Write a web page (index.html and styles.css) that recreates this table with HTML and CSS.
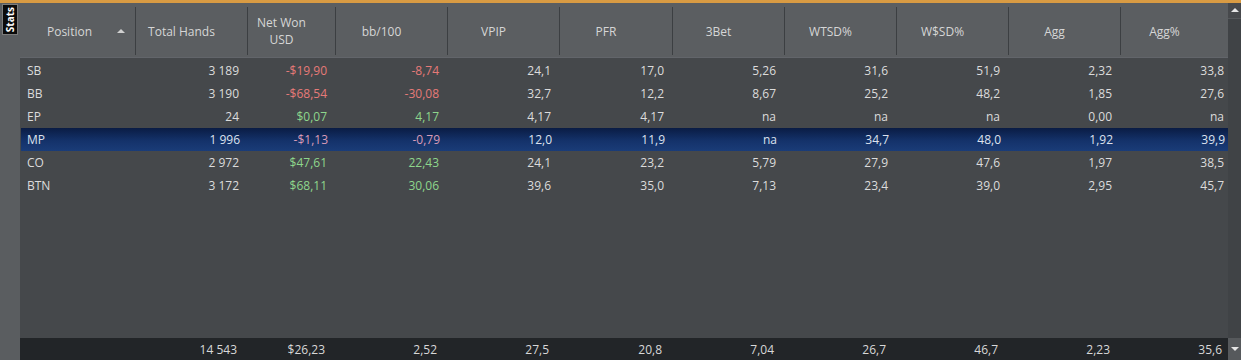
FILE: index.html
```html
<!DOCTYPE html>
<html>
<head>
<meta charset="utf-8">
<link rel="stylesheet" href="styles.css">
</head>
<body>
<div class="app">
  <div class="topbar"></div>
  <div class="main">
    <div class="sidebar">
      <div class="tab"><span>Stats</span></div>
    </div>
    <div class="table">
      <div class="thead">
        <div class="th pos"><span>Position</span><span class="sort"></span></div>
        <div class="th">Total Hands</div>
        <div class="th">Net Won<br>USD</div>
        <div class="th">bb/100</div>
        <div class="th">VPIP</div>
        <div class="th">PFR</div>
        <div class="th">3Bet</div>
        <div class="th">WTSD%</div>
        <div class="th">W$SD%</div>
        <div class="th">Agg</div>
        <div class="th last">Agg%</div>
      </div>
      <div class="tbody">
        <div class="tr">
          <div class="td name">SB</div><div class="td">3 189</div><div class="td neg">-$19,90</div><div class="td neg">-8,74</div><div class="td">24,1</div><div class="td">17,0</div><div class="td">5,26</div><div class="td">31,6</div><div class="td">51,9</div><div class="td">2,32</div><div class="td last">33,8</div>
        </div>
        <div class="tr">
          <div class="td name">BB</div><div class="td">3 190</div><div class="td neg">-$68,54</div><div class="td neg">-30,08</div><div class="td">32,7</div><div class="td">12,2</div><div class="td">8,67</div><div class="td">25,2</div><div class="td">48,2</div><div class="td">1,85</div><div class="td last">27,6</div>
        </div>
        <div class="tr">
          <div class="td name">EP</div><div class="td">24</div><div class="td pos-val">$0,07</div><div class="td pos-val">4,17</div><div class="td">4,17</div><div class="td">4,17</div><div class="td">na</div><div class="td">na</div><div class="td">na</div><div class="td">0,00</div><div class="td last">na</div>
        </div>
        <div class="tr selected">
          <div class="td name">MP</div><div class="td">1 996</div><div class="td neg">-$1,13</div><div class="td neg">-0,79</div><div class="td">12,0</div><div class="td">11,9</div><div class="td">na</div><div class="td">34,7</div><div class="td">48,0</div><div class="td">1,92</div><div class="td last">39,9</div>
        </div>
        <div class="tr">
          <div class="td name">CO</div><div class="td">2 972</div><div class="td pos-val">$47,61</div><div class="td pos-val">22,43</div><div class="td">24,1</div><div class="td">23,2</div><div class="td">5,79</div><div class="td">27,9</div><div class="td">47,6</div><div class="td">1,97</div><div class="td last">38,5</div>
        </div>
        <div class="tr">
          <div class="td name">BTN</div><div class="td">3 172</div><div class="td pos-val">$68,11</div><div class="td pos-val">30,06</div><div class="td">39,6</div><div class="td">35,0</div><div class="td">7,13</div><div class="td">23,4</div><div class="td">39,0</div><div class="td">2,95</div><div class="td last">45,7</div>
        </div>
      </div>
      <div class="tfoot">
        <div class="td name"></div><div class="td">14 543</div><div class="td">$26,23</div><div class="td">2,52</div><div class="td">27,5</div><div class="td">20,8</div><div class="td">7,04</div><div class="td">26,7</div><div class="td">46,7</div><div class="td">2,23</div><div class="td last">35,6</div>
      </div>
    </div>
    <div class="scroll">
      <div class="sb-up"><span class="tri-up"></span></div>
      <div class="sb-track"></div>
      <div class="sb-down"><span class="tri-down"></span></div>
    </div>
  </div>
</div>
</body>
</html>
```
FILE: styles.css
```css
* { box-sizing: border-box; }
html, body { margin: 0; padding: 0; }
body {
  width: 1241px;
  height: 360px;
  overflow: hidden;
  background: #45484b;
  font-family: "Open Sans", "Noto Sans", "DejaVu Sans", sans-serif;
  font-size: 12px;
  color: #dcdcdc;
}
.app { display: flex; flex-direction: column; height: 360px; }
.topbar { height: 3px; background: #d99b43; flex: none; }
.main { display: flex; flex: 1; min-height: 0; }

.sidebar {
  width: 20px;
  flex: none;
  background: #5a5d60;
  padding: 1px 0 0 2px;
}
.tab {
  width: 16px;
  height: 31px;
  background: #0b0b0b;
  border: 1px solid #7c7c7c;
  display: flex;
  align-items: center;
  justify-content: center;
}
.tab span {
  writing-mode: vertical-rl;
  transform: rotate(180deg);
  color: #ffffff;
  font-weight: bold;
  font-size: 10px;
  line-height: 1;
}

.table {
  width: 1208px;
  flex: none;
  display: flex;
  flex-direction: column;
  --cols: 116px 112px 88px 112px 112px 113px 112px 112px 112px 112px 107px;
}
.thead {
  display: grid;
  grid-template-columns: var(--cols);
  height: 55px;
  padding: 4px 0 2px;
  background: #5b5e61;
  border-bottom: 1px solid #62656a;
  flex: none;
}
.th {
  position: relative;
  display: flex;
  align-items: center;
  justify-content: center;
  text-align: center;
  padding-right: 20px;
  border-right: 1px solid #3c3f42;
  color: #d6d6d6;
  line-height: 17px;
}
.th.last { border-right: none; }
.th.pos span:first-child { padding-left: 4px; }
.sort {
  position: absolute;
  right: 10px;
  top: 22px;
  width: 0;
  height: 0;
  border-left: 4px solid transparent;
  border-right: 4px solid transparent;
  border-bottom: 4px solid #d0d0d0;
}

.tbody {
  flex: 1;
  padding-top: 1px;
  background: #45484b;
}
.tr, .tfoot {
  display: grid;
  grid-template-columns: var(--cols);
  height: 23px;
}
.td {
  display: flex;
  align-items: center;
  justify-content: flex-end;
  padding-right: 9px;
  white-space: nowrap;
}
.td.name { justify-content: flex-start; padding-left: 7px; padding-right: 0; }
.td.last { padding-right: 4px; }
.neg { color: #e57a78; }
.pos-val { color: #8ed68c; }
.tr.selected {
  background: linear-gradient(#0a1c44, #14326a 55%, #1a3c78);
  margin-left: 1px;
}
.tr.selected .td.name { padding-left: 6px; }
.tr.selected .td { color: #dde2ee; }
.tr.selected .td.neg { color: #d99bb6; }

.tfoot {
  height: 22px;
  background: #222528;
  flex: none;
  color: #d8d8d8;
}
.tfoot .td { padding-right: 11px; }
.tfoot .td.last { padding-right: 6px; }

.scroll {
  width: 13px;
  flex: none;
  display: flex;
  flex-direction: column;
  background: #404346;
}
.sb-up {
  height: 16px;
  background: #47494c;
  border-bottom: 1px solid #55585b;
  display: flex;
  justify-content: center;
  padding-top: 5px;
}
.tri-up {
  width: 0; height: 0;
  border-left: 4px solid transparent;
  border-right: 4px solid transparent;
  border-bottom: 4px solid #e6e6e6;
}
.sb-track { flex: 1; background: #404346; }
.sb-down {
  height: 22px;
  background: #56595c;
  display: flex;
  justify-content: center;
  padding-top: 9px;
}
.tri-down {
  width: 0; height: 0;
  border-left: 4px solid transparent;
  border-right: 4px solid transparent;
  border-top: 4px solid #e6e6e6;
}
```
